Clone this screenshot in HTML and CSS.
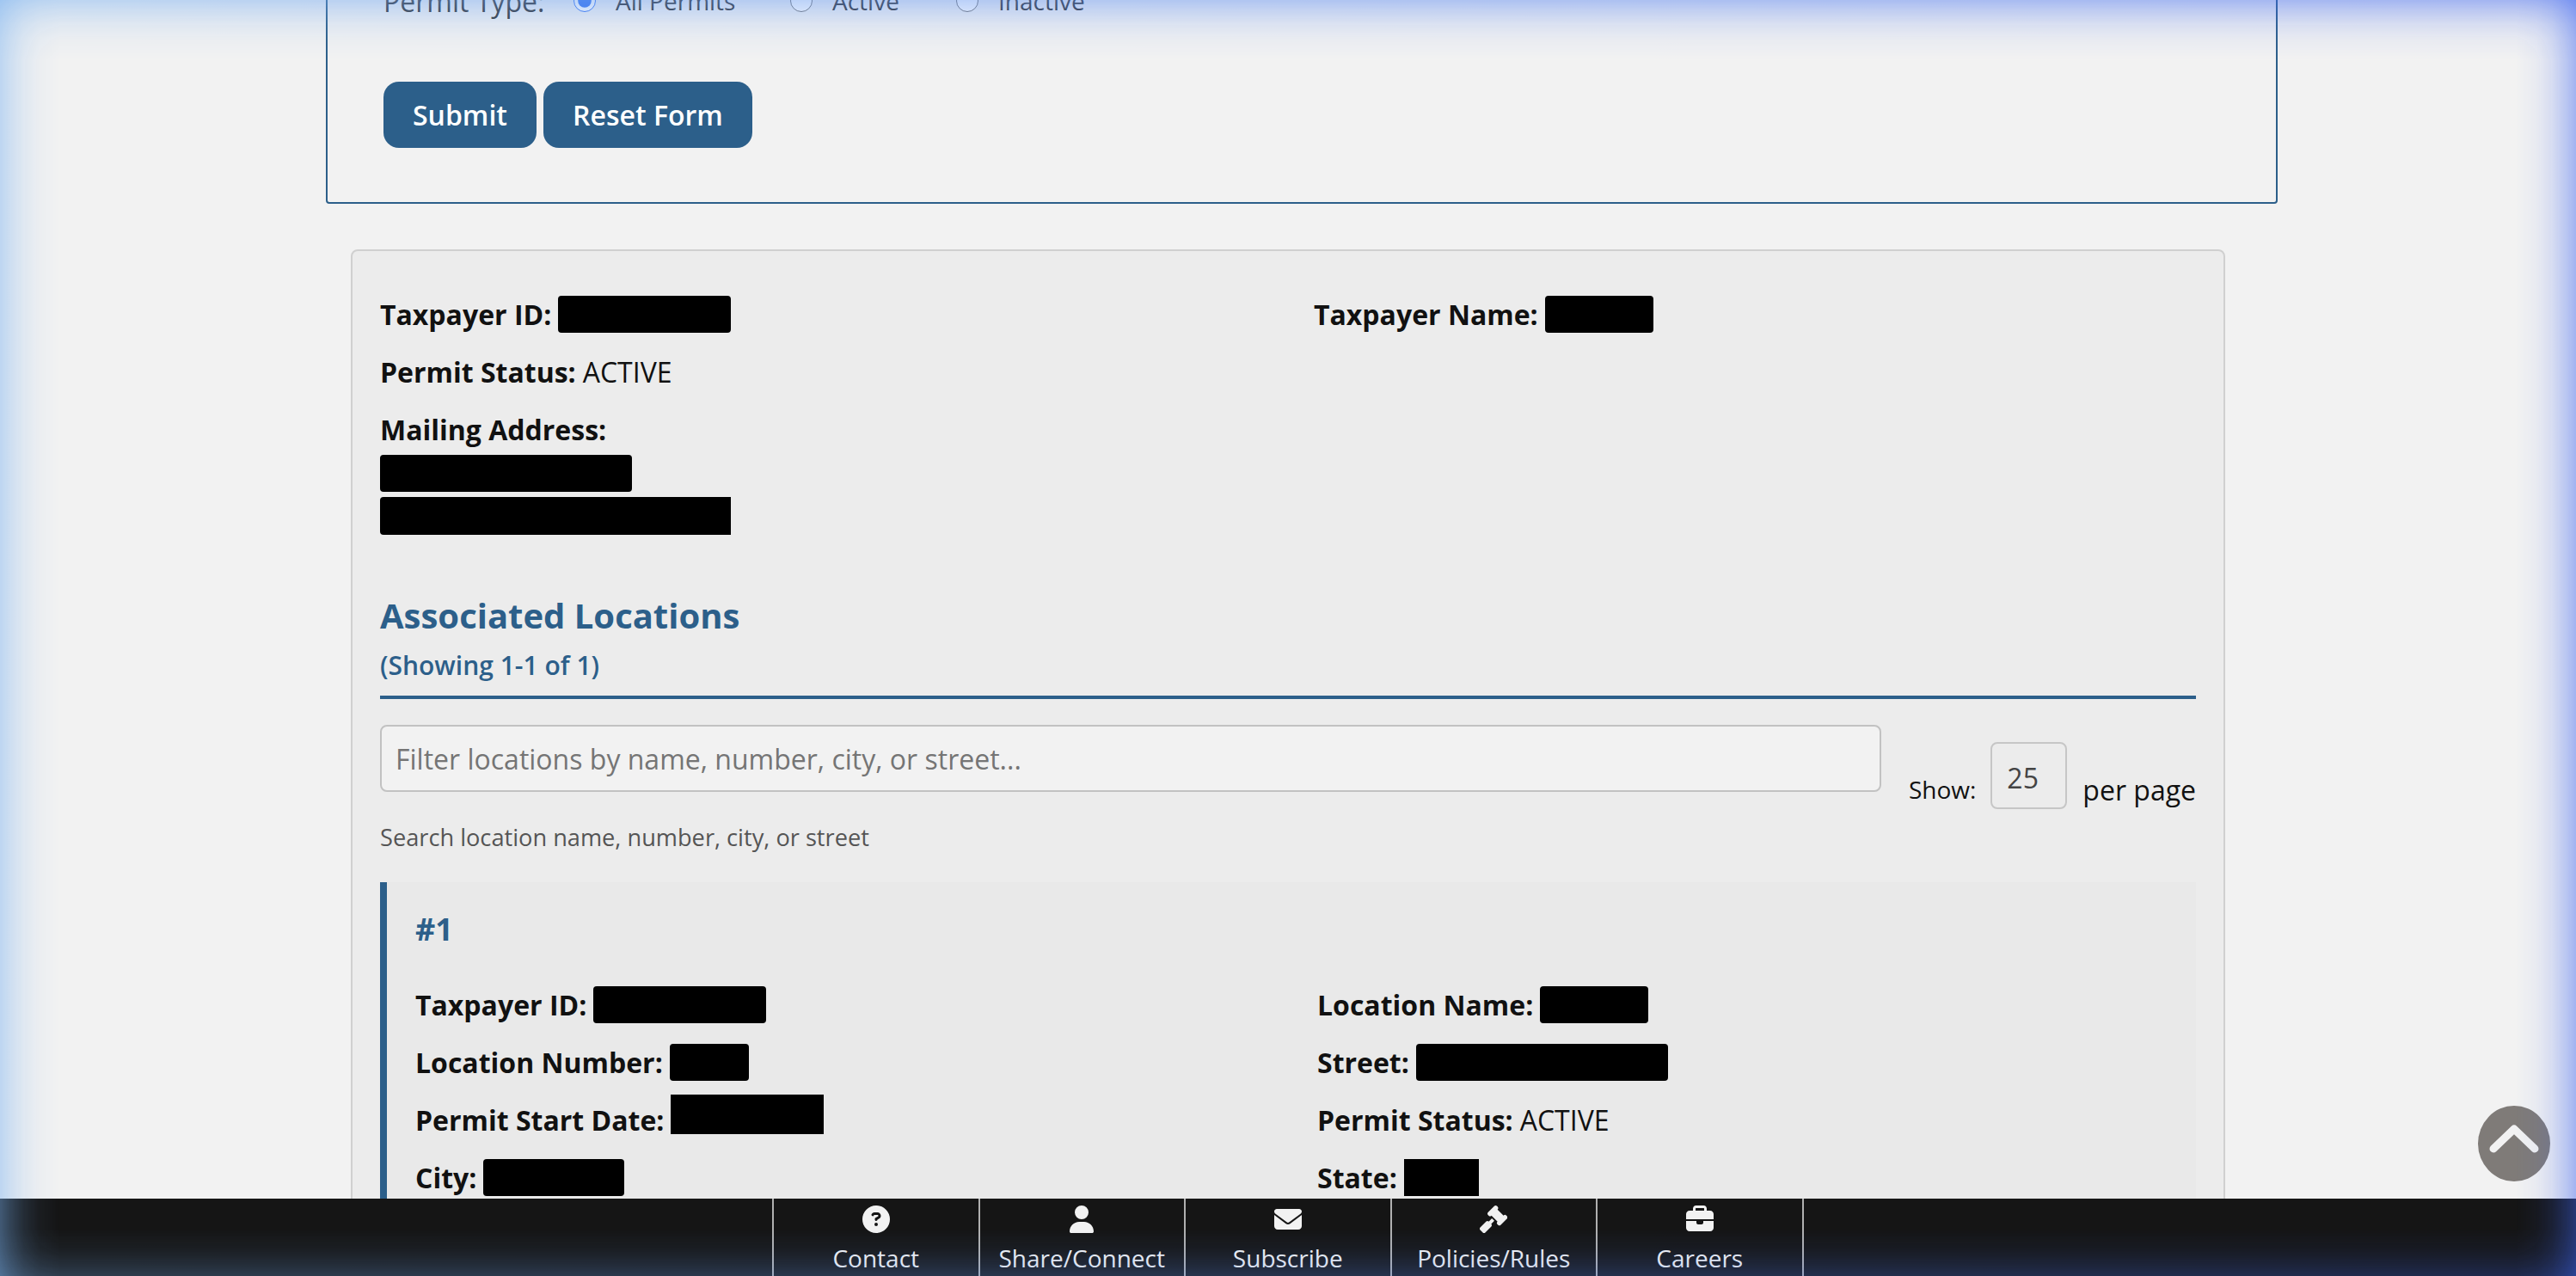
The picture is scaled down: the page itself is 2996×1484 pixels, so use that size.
FILE: index.html
```html
<!DOCTYPE html>
<html lang="en">
<head>
<meta charset="utf-8">
<title>Permit Search</title>
<link rel="stylesheet" href="styles.css">
</head>
<body>
<main class="page">
  <form class="search-form">
    <div class="type-row">
      <span class="type-label">Permit Type:</span>
      <label class="radio radio-all"><input type="radio" name="ptype" checked>All Permits</label>
      <label class="radio radio-active"><input type="radio" name="ptype">Active</label>
      <label class="radio radio-inactive"><input type="radio" name="ptype">Inactive</label>
    </div>
    <div class="actions">
      <button type="button" class="btn btn-submit">Submit</button>
      <button type="button" class="btn btn-reset">Reset Form</button>
    </div>
  </form>

  <section class="card">
    <div class="summary-grid">
      <div class="row"><b>Taxpayer ID:</b><span class="redact w201"></span></div>
      <div class="row"><b>Taxpayer Name:</b><span class="redact w126"></span></div>
    </div>
    <div class="row"><b>Permit Status:</b><span>ACTIVE</span></div>
    <div class="row row-tight"><b>Mailing Address:</b></div>
    <div class="redact block w293"></div>
    <div class="redact block tall w408"></div>

    <h3 class="section-title">Associated Locations</h3>
    <p class="section-count">(Showing 1-1 of 1)</p>

    <div class="filter-row">
      <input class="filter-input" type="text" placeholder="Filter locations by name, number, city, or street...">
      <div class="page-size">
        <span class="show-label">Show:</span>
        <select class="size-select"><option>25</option></select>
        <span class="per-page">per page</span>
      </div>
    </div>
    <p class="hint">Search location name, number, city, or street</p>

    <article class="location">
      <h4 class="location-num">#1</h4>
      <div class="location-grid">
        <div class="row"><b>Taxpayer ID:</b><span class="redact w201"></span></div>
        <div class="row"><b>Location Name:</b><span class="redact w126"></span></div>
        <div class="row"><b>Location Number:</b><span class="redact w92"></span></div>
        <div class="row"><b>Street:</b><span class="redact w293"></span></div>
        <div class="row"><b>Permit Start Date:</b><span class="redact date"></span></div>
        <div class="row"><b>Permit Status:</b><span>ACTIVE</span></div>
        <div class="row"><b>City:</b><span class="redact w164"></span></div>
        <div class="row"><b>State:</b><span class="redact w87 square"></span></div>
      </div>
    </article>
  </section>
</main>

<button type="button" class="to-top" aria-label="Back to top">
  <svg viewBox="0 0 84 88"><path d="M18 50 L42 27 L66 50"/></svg>
</button>

<footer class="dock">
  <a class="dock-item"><svg viewBox="0 0 512 512"><path d="M256 512A256 256 0 1 0 256 0a256 256 0 1 0 0 512zM169.8 165.3c7.9-22.3 29.1-37.3 52.8-37.3h58.3c34.9 0 63.1 28.3 63.1 63.1c0 22.6-12.1 43.5-31.7 54.8L280 264.4c-.2 13-10.9 23.6-24 23.6c-13.3 0-24-10.7-24-24V250.5c0-8.6 4.6-16.5 12.1-20.8l44.3-25.4c4.7-2.7 7.6-7.7 7.6-13.1c0-8.4-6.8-15.1-15.1-15.1H222.6c-3.4 0-6.4 2.1-7.5 5.3l-.4 1.2c-4.4 12.5-18.2 19-30.6 14.6s-19-18.2-14.6-30.6l.4-1.2zM224 352a32 32 0 1 1 64 0 32 32 0 1 1 -64 0z"/></svg><span>Contact</span></a>
  <a class="dock-item"><svg viewBox="0 0 448 512"><path d="M224 256A128 128 0 1 0 224 0a128 128 0 1 0 0 256zm-45.7 48C79.8 304 0 383.8 0 482.3C0 498.7 13.3 512 29.7 512H418.3c16.4 0 29.7-13.3 29.7-29.7C448 383.8 368.2 304 269.7 304H178.3z"/></svg><span>Share/Connect</span></a>
  <a class="dock-item"><svg viewBox="0 0 512 512"><path d="M48 64C21.5 64 0 85.5 0 112c0 15.1 7.1 29.3 19.2 38.4L236.8 313.6c11.4 8.5 27 8.5 38.4 0L492.8 150.4c12.1-9.1 19.2-23.3 19.2-38.4c0-26.5-21.5-48-48-48H48zM0 176V384c0 35.3 28.7 64 64 64H448c35.3 0 64-28.7 64-64V176L294.4 339.2c-22.8 17.1-54 17.1-76.8 0L0 176z"/></svg><span>Subscribe</span></a>
  <a class="dock-item"><svg viewBox="0 0 512 512"><path d="M318.6 9.4c-12.5-12.5-32.8-12.5-45.3 0l-120 120c-12.5 12.5-12.5 32.8 0 45.3l16 16c12.5 12.5 32.8 12.5 45.3 0l4-4L330.7 298.7l-4 4c-12.5 12.5-12.5 32.8 0 45.3l16 16c12.5 12.5 32.8 12.5 45.3 0l120-120c12.5-12.5 12.5-32.8 0-45.3l-16-16c-12.5-12.5-32.8-12.5-45.3 0l-4 4L330.6 74.6l4-4c12.5-12.5 12.5-32.8 0-45.3l-16-16zm-152 288c-12.5-12.5-32.8-12.5-45.3 0l-112 112c-12.5 12.5-12.5 32.8 0 45.3l48 48c12.5 12.5 32.8 12.5 45.3 0l112-112c12.5-12.5 12.5-32.8 0-45.3l-1.4-1.4L272 285.3 226.7 240 168 298.7l-1.4-1.4z"/></svg><span>Policies/Rules</span></a>
  <a class="dock-item"><svg viewBox="0 0 512 512"><path d="M184 48H328c4.4 0 8 3.6 8 8V96H176V56c0-4.4 3.6-8 8-8zm-56 8V96H64C28.7 96 0 124.7 0 160v96H192 320 512V160c0-35.3-28.7-64-64-64H384V56c0-30.9-25.1-56-56-56H184c-30.9 0-56 25.1-56 56zM512 288H320v32c0 17.7-14.3 32-32 32H224c-17.7 0-32-14.3-32-32V288H0V416c0 35.3 28.7 64 64 64H448c35.3 0 64-28.7 64-64V288z"/></svg><span>Careers</span></a>
</footer>

<div class="edge-glow"></div>
</body>
</html>
```

FILE: styles.css
```css
* { box-sizing: border-box; }

html, body {
  margin: 0;
  height: 100%;
  overflow: hidden;
}

body {
  background: #f2f2f2;
  color: #111;
  font-family: "Open Sans", "Liberation Sans", sans-serif;
  font-size: 32px;
  line-height: 43px;
}

.page {
  margin-top: -60px;
}

/* search form */
.search-form {
  width: 2270px;
  height: 297px;
  margin-left: 379px;
  padding: 37px 0 0 65px;
  border: 2px solid #2c5f8a;
  border-radius: 4px;
}

.type-row {
  display: flex;
  align-items: center;
  height: 44px;
  color: #333;
  font-size: 28px;
}

.type-label { width: 221px; font-size: 32px; }

.radio {
  display: flex;
  align-items: center;
  gap: 23px;
}

.radio input {
  width: 26px;
  height: 26px;
  margin: 0;
  accent-color: #3b76f0;
}

.radio-all { width: 252px; }
.radio-active { width: 193px; }

.actions {
  display: flex;
  gap: 8px;
  margin-top: 72px;
}

.btn {
  height: 77px;
  border: 0;
  border-radius: 18px;
  background: #2c5f8a;
  color: #fff;
  font: 600 32px "Open Sans", sans-serif;
}

.btn-submit { width: 178px; }
.btn-reset { width: 243px; }

/* result card */
.card {
  width: 2180px;
  margin: 53px 0 0 408px;
  padding: 52px 32px 0;
  border: 2px solid #d0d0d0;
  border-radius: 8px;
  background: #ececec;
}

.summary-grid {
  display: grid;
  grid-template-columns: 1086px 1fr;
}

.row {
  display: flex;
  align-items: center;
  gap: 8px;
  height: 43px;
  margin-bottom: 24px;
}

.row-tight { margin-bottom: 8px; }

.row b { font-weight: 700; }

.redact {
  display: inline-block;
  height: 43px;
  border-radius: 4px;
  background: #000;
}

.block { display: block; margin-bottom: 6px; }
.tall { height: 44px; border-radius: 4px 0 0 4px; }
.square { border-radius: 0; }

.w87 { width: 87px; }
.w92 { width: 92px; }
.w126 { width: 126px; }
.w164 { width: 164px; }
.w201 { width: 201px; }
.w293 { width: 293px; }
.w408 { width: 408px; }

.date {
  width: 178px;
  height: 46px;
  margin-top: -14px;
  border-radius: 0;
}

.section-title {
  margin: 64px 0 0;
  color: #2c5f8a;
  font-size: 40px;
  font-weight: 700;
  line-height: 60px;
}

.section-count {
  margin: 8px 0 0;
  padding-bottom: 15px;
  border-bottom: 4px solid #2c5f8a;
  color: #2c5f8a;
  font-size: 30px;
  font-weight: 600;
  line-height: 40px;
}

.filter-row {
  display: flex;
  justify-content: space-between;
  align-items: flex-end;
  margin-top: 30px;
}

.filter-input {
  width: 1746px;
  height: 78px;
  padding: 0 16px;
  border: 2px solid #c2c2c2;
  border-radius: 8px;
  background: #f2f2f2;
  font: 32px "Open Sans", sans-serif;
  color: #111;
}

.filter-input::placeholder { color: #757575; opacity: 1; }

.page-size {
  display: flex;
  align-items: center;
  margin-bottom: -20px;
}

.show-label { margin-top: 32px; font-size: 28px; }

.size-select {
  width: 89px;
  height: 78px;
  margin: 0 18px 0 17px;
  padding: 4px 0 0 17px;
  appearance: none;
  border: 2px solid #c6c6c6;
  border-radius: 8px;
  background: #ececec;
  color: #444;
  font: 32px "Open Sans", sans-serif;
}

.per-page { margin-top: 32px; font-size: 32px; }

.hint {
  margin: 33px 0 0;
  color: #555;
  font-size: 27.2px;
  line-height: 40px;
}

/* location */
.location {
  margin-top: 32px;
  padding: 33px 32px 40px 33px;
  border-left: 8px solid #2c5f8a;
  background: #e9e9e9;
}

.location-num {
  margin: 0;
  color: #2c5f8a;
  font-size: 36px;
  font-weight: 700;
  line-height: 44px;
}

.location-grid {
  display: grid;
  grid-template-columns: 1049px 1fr;
  margin-top: 44px;
}

/* floating bits */
.to-top {
  position: fixed;
  top: 1286px;
  left: 2882px;
  width: 84px;
  height: 88px;
  padding: 0;
  border: 0;
  border-radius: 50%;
  background: #7f7b78;
}

.to-top svg { display: block; width: 100%; height: 100%; }

.to-top path {
  fill: none;
  stroke: #f2f2f2;
  stroke-width: 9;
  stroke-linecap: round;
  stroke-linejoin: round;
}

.dock {
  position: fixed;
  left: 0;
  right: 0;
  bottom: 0;
  display: flex;
  height: 90px;
  padding-left: 898px;
  background: #151515;
}

.dock-item {
  display: flex;
  flex-direction: column;
  align-items: center;
  width: 239.5px;
  padding-top: 8px;
  border-left: 2px solid #b0b0b0;
  color: #f2f2f2;
  font-size: 28px;
  line-height: 38px;
}

.dock-item:last-child {
  width: 241.5px;
  border-right: 2px solid #b0b0b0;
}

.dock-item svg {
  width: 32px;
  height: 32px;
  margin-bottom: 10px;
  fill: #f2f2f2;
}

.edge-glow {
  --fade: rgba(0,0,0,.44) 0, rgba(0,0,0,.3) 12px, rgba(0,0,0,.15) 28px, rgba(0,0,0,.05) 46px, transparent 70px;
  --fade-low: rgba(0,0,0,.26) 0, rgba(0,0,0,.16) 14px, rgba(0,0,0,.07) 30px, transparent 55px;
  position: fixed;
  inset: 0;
  z-index: 10;
  pointer-events: none;
  background: linear-gradient(90deg, #7ab2f0, #3c64f0);
  -webkit-mask-image:
    linear-gradient(to right, var(--fade)),
    linear-gradient(to left, var(--fade)),
    linear-gradient(to bottom, var(--fade)),
    linear-gradient(to top, var(--fade-low));
  mask-image:
    linear-gradient(to right, var(--fade)),
    linear-gradient(to left, var(--fade)),
    linear-gradient(to bottom, var(--fade)),
    linear-gradient(to top, var(--fade-low));
}
```
